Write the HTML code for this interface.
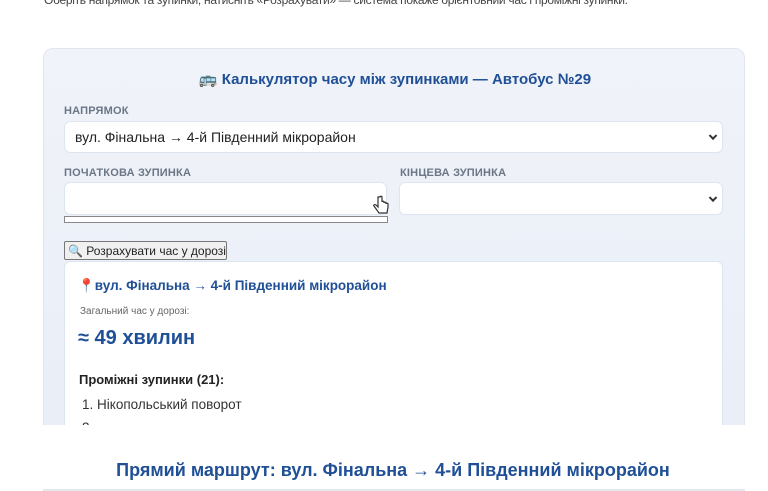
<!DOCTYPE html>
<html><head><meta charset="utf-8"><style>
*{box-sizing:border-box;margin:0;padding:0}
body{width:768px;height:491px;overflow:hidden;background:#fff;font-family:"Liberation Sans",sans-serif;position:relative;color:#222}
.abs{position:absolute}
.top{left:44px;top:-7px;font-size:12px;color:#444;white-space:nowrap;letter-spacing:-0.3px}
.card{left:43px;top:48px;width:702px;height:400px;background:linear-gradient(180deg,#f0f3f9,#e9eef7);border:1px solid #e0e6f0;border-radius:10px}
.title{left:0;width:790px;top:70px;text-align:center;font-size:15px;font-weight:bold;color:#1f4f96}
.lbl{font-size:11px;font-weight:bold;color:#6b7686;letter-spacing:0.2px}
.sel{background:#fff;border:1px solid #dde5f0;border-radius:6px}
.chev{position:absolute;right:6px;top:50%;width:6px;height:6px;border-right:2px solid #333;border-bottom:2px solid #333;transform:translateY(-70%) rotate(45deg)}
.res{left:64px;top:261px;width:659px;height:200px;background:#fff;border:1px solid #dde5f0;border-radius:6px}
.cut{left:0;top:425px;width:768px;height:66px;background:#fff}
</style></head><body>
<div class="abs top">Оберіть напрямок та зупинки, натисніть «Розрахувати» — система покаже орієнтовний час і проміжні зупинки.</div>
<div class="abs card"></div>
<div class="abs title">🚌 Калькулятор часу між зупинками — Автобус №29</div>
<div class="abs lbl" style="left:64px;top:105px">НАПРЯМОК</div>
<div class="abs sel" style="left:64px;top:121px;width:659px;height:32px"><span style="position:absolute;left:10px;top:7px;font-size:14px;color:#222;white-space:nowrap">вул. Фінальна → 4-й Південний мікрорайон</span><span class="chev"></span></div>
<div class="abs lbl" style="left:64px;top:167px">ПОЧАТКОВА ЗУПИНКА</div>
<div class="abs lbl" style="left:400px;top:167px">КІНЦЕВА ЗУПИНКА</div>
<div class="abs sel" style="left:64px;top:182px;width:323px;height:33px"></div>
<div class="abs" style="left:64px;top:216px;width:324px;height:7px;background:#fff;border:1px solid #888"></div>
<svg class="abs" style="left:372px;top:195px" width="18" height="22" viewBox="0 0 18 22"><path d="M6 2v10l-2-2c-1-1-3 0-2 1l5 7h8l1-6v-3c0-1-2-1-2 0v-1c0-1-2-1-2 0v-1c0-1-2-1-2 0V2c0-1-2-1-2 0z" fill="#fff" stroke="#333" stroke-width="1.2"/></svg>
<div class="abs sel" style="left:399px;top:182px;width:324px;height:33px"><span class="chev"></span></div>
<div class="abs" style="left:64px;top:241px;width:163px;height:19px;background:#f0f0f0;border:1px solid #777;border-radius:2px;font-size:12px;padding:2px 0 0 3px;white-space:nowrap">🔍 Розрахувати час у дорозі</div>
<div class="abs res"></div>
<div class="abs" style="left:78px;top:278px;font-size:13.5px;font-weight:bold;color:#1f4f96;white-space:nowrap">📍вул. Фінальна → 4-й Південний мікрорайон</div>
<div class="abs" style="left:80px;top:306px;font-size:10px;color:#666">Загальний час у дорозі:</div>
<div class="abs" style="left:78px;top:327px;font-size:20px;font-weight:bold;color:#1f4f96">≈ 49 хвилин</div>
<div class="abs" style="left:79px;top:372px;font-size:13px;font-weight:bold;color:#222">Проміжні зупинки (21):</div>
<div class="abs" style="left:82px;top:397px;font-size:13.5px;color:#333">1. Нікопольський поворот</div>
<div class="abs" style="left:82px;top:420px;font-size:13.5px;color:#333">2. ...</div>
<div class="abs cut"></div>
<div class="abs" style="left:0;width:786px;top:460px;text-align:center;font-size:18px;font-weight:bold;color:#1f4f96">Прямий маршрут: вул. Фінальна → 4-й Південний мікрорайон</div>
<div class="abs" style="left:43px;top:489px;width:702px;height:2px;background:#e3e8f0"></div>
</body></html>
